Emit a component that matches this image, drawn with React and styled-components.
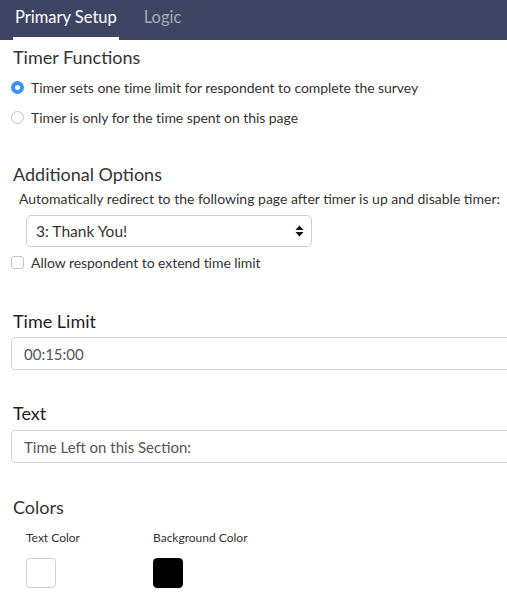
import React, { useState } from 'react';
import styled, { createGlobalStyle } from 'styled-components';

const GlobalStyle = createGlobalStyle`
  html, body {
    margin: 0;
    padding: 0;
    background: #fff;
    overflow-x: hidden;
  }
  body {
    font-family: Lato, "Open Sans", Arial, sans-serif;
    color: #333;
  }
`;

const TabBar = styled.div`
  height: 40px;
  background: #3d4563;
  display: flex;
  align-items: flex-end;
  gap: 23px;
  padding-left: 13px;
  box-sizing: border-box;
`;

const Tab = styled.div`
  height: 40px;
  box-sizing: border-box;
  padding: 5px 2px 0;
  font-size: 16.5px;
  line-height: 24px;
  color: ${(p) => (p.$active ? '#fff' : '#a5a9b9')};
  border-bottom: 3px solid ${(p) => (p.$active ? '#fff' : 'transparent')};
  cursor: pointer;
`;

const Content = styled.div`
  padding-left: 11px;
`;

const SectionTitle = styled.div`
  font-size: 18px;
  line-height: 24px;
  color: ${(p) => (p.$strong ? '#1f1f1f' : '#333')};
  margin-top: ${(p) => p.$top}px;
  padding-left: 2px;
`;

const OptionRow = styled.label`
  display: flex;
  align-items: center;
  gap: 7px;
  height: ${(p) => p.$h || 30}px;
  font-size: 14px;
  letter-spacing: -0.05px;
  color: #333;
  margin-top: ${(p) => p.$top || 0}px;
`;

const RadioDot = styled.span`
  flex-shrink: 0;
  width: 13px;
  height: 13px;
  border-radius: 50%;
  box-sizing: border-box;
  background: ${(p) => (p.$on ? '#3d8ef2' : '#fff')};
  border: ${(p) => (p.$on ? 'none' : '1px solid #c4c4c4')};
  display: flex;
  align-items: center;
  justify-content: center;
  &::after {
    content: '';
    width: 5px;
    height: 5px;
    border-radius: 50%;
    background: #fff;
    display: ${(p) => (p.$on ? 'block' : 'none')};
  }
`;

const CheckBox = styled.span`
  flex-shrink: 0;
  width: 13px;
  height: 13px;
  box-sizing: border-box;
  border: 1px solid #c4c4c4;
  border-radius: 3px;
  background: #fff;
`;

const Hint = styled.div`
  font-size: 14px;
  line-height: 20px;
  margin-top: 3px;
  padding-left: 8px;
  color: #333;
`;

const SelectBox = styled.div`
  margin: 6px 0 0 15px;
  width: 286px;
  height: 32px;
  box-sizing: border-box;
  border: 1px solid #cfcfcf;
  border-radius: 5px;
  display: flex;
  align-items: center;
  justify-content: space-between;
  padding: 0 7px 0 9px;
  font-size: 15.5px;
  color: #333;
`;

const Field = styled.div`
  margin-top: ${(p) => p.$top}px;
  margin-right: -20px;
  height: 33px;
  box-sizing: border-box;
  border: 1px solid #d4d4d4;
  border-radius: 4px;
  display: flex;
  align-items: center;
  padding-left: 12px;
  font-size: 15px;
  color: #555;
`;

const SwatchGrid = styled.div`
  display: grid;
  grid-template-columns: 127px 127px;
  padding-left: 15px;
  margin-top: 9px;
`;

const SwatchLabel = styled.div`
  font-size: 12px;
  line-height: 20px;
  color: #333;
`;

const Swatch = styled.div`
  width: 30px;
  height: 30px;
  box-sizing: border-box;
  border-radius: 4px;
  margin-top: 10px;
  background: ${(p) => p.$color};
  border: 1px solid ${(p) => (p.$color === '#000' ? '#000' : '#d0d0d0')};
`;

const Arrows = () => (
  <svg width="9" height="12" viewBox="0 0 9 12">
    <path d="M4.5 0.5 L8.5 5 L0.5 5 Z" fill="#111" />
    <path d="M4.5 11.5 L8.5 7 L0.5 7 Z" fill="#111" />
  </svg>
);

export default function App() {
  const [tab, setTab] = useState('setup');
  const [mode, setMode] = useState('survey');

  return (
    <>
      <GlobalStyle />
      <TabBar>
        <Tab $active={tab === 'setup'} onClick={() => setTab('setup')}>Primary Setup</Tab>
        <Tab $active={tab === 'logic'} onClick={() => setTab('logic')}>Logic</Tab>
      </TabBar>
      <Content>
        <SectionTitle $top={5}>Timer Functions</SectionTitle>
        <OptionRow $top={3} onClick={() => setMode('survey')}>
          <RadioDot $on={mode === 'survey'} />
          Timer sets one time limit for respondent to complete the survey
        </OptionRow>
        <OptionRow onClick={() => setMode('page')}>
          <RadioDot $on={mode === 'page'} />
          Timer is only for the time spent on this page
        </OptionRow>

        <SectionTitle $top={30}>Additional Options</SectionTitle>
        <Hint>Automatically redirect to the following page after timer is up and disable timer:</Hint>
        <SelectBox>
          <span>3: Thank You!</span>
          <Arrows />
        </SelectBox>
        <OptionRow $h={20} $top={5}>
          <CheckBox />
          Allow respondent to extend time limit
        </OptionRow>

        <SectionTitle $top={37} $strong>Time Limit</SectionTitle>
        <Field $top={4}>00:15:00</Field>

        <SectionTitle $top={31} $strong>Text</SectionTitle>
        <Field $top={5}>Time Left on this Section:</Field>

        <SectionTitle $top={32}>Colors</SectionTitle>
        <SwatchGrid>
          <div>
            <SwatchLabel>Text Color</SwatchLabel>
            <Swatch $color="#fff" />
          </div>
          <div>
            <SwatchLabel>Background Color</SwatchLabel>
            <Swatch $color="#000" />
          </div>
        </SwatchGrid>
      </Content>
    </>
  );
}
